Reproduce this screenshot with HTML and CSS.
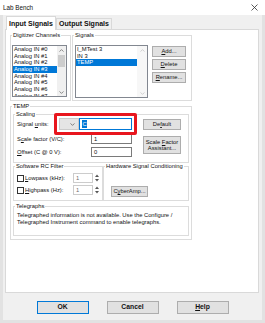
FILE: index.html
```html
<!DOCTYPE html>
<html lang="en">
<head>
  <meta charset="UTF-8">
  <title>Lab Bench</title>
  <link rel="stylesheet" href="styles.css">
</head>
<body>

<div class="titlebar">
  <span>Lab Bench</span>
  <svg width="7" height="7" viewBox="0 0 7 7"><path d="M0.5 0.5L6.5 6.5M6.5 0.5L0.5 6.5" stroke="#333" stroke-width="0.8" fill="none"/></svg>
</div>

<div class="window">
  <div class="tabs">
    <div class="tab active">Input Signals</div>
    <div class="tab">Output Signals</div>
  </div>

  <div class="panel">
    <div class="top-row">
      <div class="group channels">
        <div class="legend">Digitizer Channels</div>
        <div class="listbox channel-list">
          <div class="items">
            <div class="item">Analog IN #0</div>
            <div class="item">Analog IN #1</div>
            <div class="item">Analog IN #2</div>
            <div class="item selected">Analog IN #3</div>
            <div class="item">Analog IN #4</div>
            <div class="item">Analog IN #5</div>
            <div class="item">Analog IN #6</div>
            <div class="item">Analog IN #7</div>
          </div>
          <div class="scrollbar">
            <svg class="arrow" width="5" height="3" viewBox="0 0 5 3"><path d="M0.5 2.6L2.5 0.6L4.5 2.6" stroke="#606060" stroke-width="0.7" fill="none"/></svg>
            <div class="thumb"></div>
            <svg class="arrow down" width="5" height="3" viewBox="0 0 5 3"><path d="M0.5 0.4L2.5 2.4L4.5 0.4" stroke="#606060" stroke-width="0.7" fill="none"/></svg>
          </div>
        </div>
      </div>

      <div class="group signals">
        <div class="legend">Signals</div>
        <div class="signals-body">
          <div class="listbox signal-list">
            <div class="items">
              <div class="item">I_MTest 3</div>
              <div class="item">IN 3</div>
              <div class="item selected">TEMP</div>
            </div>
            <div class="scrollbar disabled">
              <svg class="arrow" width="5" height="3" viewBox="0 0 5 3"><path d="M0.5 2.6L2.5 0.6L4.5 2.6" stroke="#c2c2c2" stroke-width="0.7" fill="none"/></svg>
              <svg class="arrow down" width="5" height="3" viewBox="0 0 5 3"><path d="M0.5 0.4L2.5 2.4L4.5 0.4" stroke="#c2c2c2" stroke-width="0.7" fill="none"/></svg>
            </div>
          </div>
          <div class="side-buttons">
            <button class="btn"><span><u>A</u>dd...</span></button>
            <button class="btn"><span><u>D</u>elete</span></button>
            <button class="btn"><span><u>R</u>ename...</span></button>
          </div>
        </div>
      </div>
    </div>

    <div class="group temp">
      <div class="legend">TEMP</div>

      <div class="group scaling">
        <div class="legend">Scaling</div>
        <div class="scaling-body">
          <div class="scaling-fields">
            <div class="field units">
              <span>Signal <u>u</u>nits:</span>
              <div class="combo-group">
                <div class="combo">
                  <svg width="5" height="3" viewBox="0 0 5 3"><path d="M0.5 0.4L2.5 2.4L4.5 0.4" stroke="#555" stroke-width="0.7" fill="none"/></svg>
                </div>
                <div class="unit-input"><span class="sel">C</span></div>
                <div class="highlight"></div>
              </div>
            </div>
            <div class="field factor">
              <span>S<u>c</u>ale factor (V/C):</span>
              <div class="num-input">1</div>
            </div>
            <div class="field offset">
              <span><u>O</u>ffset (C @ 0 V):</span>
              <div class="num-input">0</div>
            </div>
          </div>
          <div class="scaling-buttons">
            <button class="btn default-btn"><span>De<u>f</u>ault</span></button>
            <button class="btn assistant-btn"><span>Scale <u>F</u>actor<br>Assistant...</span></button>
          </div>
        </div>
      </div>

      <div class="filter-row">
        <div class="group rc">
          <div class="legend">Software RC Filter</div>
          <div class="rc-body">
            <div class="check-row">
              <span class="checkbox"></span>
              <span class="check-label"><u>L</u>owpass (kHz):</span>
              <div class="spin">
                <div class="spin-input">1</div>
                <div class="spin-arrows">
                  <svg width="4" height="3" viewBox="0 0 4 3"><path d="M0 3L2 0.5L4 3Z" fill="#555"/></svg>
                  <svg width="4" height="3" viewBox="0 0 4 3"><path d="M0 0L2 2.5L4 0Z" fill="#555"/></svg>
                </div>
              </div>
            </div>
            <div class="check-row">
              <span class="checkbox"></span>
              <span class="check-label"><u>H</u>ighpass (Hz):</span>
              <div class="spin">
                <div class="spin-input">1</div>
                <div class="spin-arrows">
                  <svg width="4" height="3" viewBox="0 0 4 3"><path d="M0 3L2 0.5L4 3Z" fill="#555"/></svg>
                  <svg width="4" height="3" viewBox="0 0 4 3"><path d="M0 0L2 2.5L4 0Z" fill="#555"/></svg>
                </div>
              </div>
            </div>
          </div>
        </div>
        <div class="group hw">
          <div class="legend">Hardware Signal Conditioning</div>
          <button class="btn cyber-btn"><span>C<u>y</u>berAmp...</span></button>
        </div>
      </div>

      <div class="group telegraphs">
        <div class="legend">Telegraphs</div>
        <div class="tele-text">Telegraphed information is not available. Use the Configure /<br>Telegraphed Instrument command to enable telegraphs.</div>
      </div>
    </div>
  </div>

  <div class="footer">
    <button class="btn big default"><span>OK</span></button>
    <button class="btn big"><span>Cancel</span></button>
    <button class="btn big"><span><u>H</u>elp</span></button>
  </div>
</div>

</body>
</html>
```

FILE: styles.css
```css
* {
  box-sizing: border-box;
}

body {
  margin: 0;
  width: 265px;
  height: 323px;
  overflow: hidden;
  background: #e2e2e2;
  font-family: "Liberation Sans", Arial, sans-serif;
  font-size: 5.8px;
  color: #111;
}

.titlebar {
  height: 15px;
  background: #fff;
  display: flex;
  align-items: center;
  justify-content: space-between;
  padding: 0 7px 0 3px;
  font-size: 6.3px;
}

.window {
  margin: 0 3px;
  height: 305px;
  padding-top: 1px;
  background: #f0f0f0;
}

.tabs {
  display: flex;
  align-items: flex-end;
  height: 14px;
  margin-left: 3px;
}

.tab {
  width: 56px;
  height: 11px;
  margin-bottom: 1px;
  border: 1px solid #d9d9d9;
  border-bottom: none;
  text-align: center;
  font-size: 7px;
  font-weight: bold;
  line-height: 10px;
}

.tab.active {
  width: 50px;
  height: 14px;
  margin-bottom: 0;
  line-height: 13px;
  background: #fff;
  position: relative;
  z-index: 1;
}

.panel {
  width: 254px;
  height: 264px;
  margin: -1px 0 0 2px;
  padding: 5px 0 0 4px;
  background: #fff;
  border: 1px solid #d9d9d9;
}

.group {
  border: 1px solid #dcdcdc;
}

.legend {
  width: max-content;
  height: 7px;
  margin: -4px 0 0 1px;
  padding: 0 1px;
  line-height: 7px;
  background: #fff;
}

.top-row {
  display: flex;
  gap: 1px;
}

.channels {
  width: 61px;
  height: 66px;
}

.signals {
  width: 120px;
  height: 66px;
}

.listbox {
  display: flex;
  background: #fff;
  border: 1px solid #828790;
}

.channel-list {
  width: 55px;
  height: 52px;
  margin: 6px 0 0 1px;
}

.signals-body {
  display: flex;
  align-items: flex-start;
}

.signal-list {
  width: 73px;
  height: 53px;
  margin: 6px 0 0 2px;
}

.items {
  flex: 1;
  overflow: hidden;
}

.item {
  height: 6.7px;
  line-height: 6.7px;
  padding-left: 1px;
  white-space: nowrap;
}

.item.selected {
  background: #0078d7;
  color: #fff;
}

.scrollbar {
  width: 9px;
  display: flex;
  flex-direction: column;
  align-items: center;
  background: #f0f0f0;
}

.scrollbar.disabled {
  width: 10px;
  background: #f7f7f7;
}

.arrow {
  margin-top: 2.5px;
}

.arrow.down {
  margin-top: auto;
  margin-bottom: 2.5px;
}

.thumb {
  width: 7px;
  height: 12px;
  margin-top: 3px;
  background: #cdcdcd;
}

.btn {
  display: flex;
  align-items: center;
  justify-content: center;
  padding: 0;
  font: inherit;
  color: #111;
  line-height: 6.5px;
  text-align: center;
  background: #e1e1e1;
  border: 1px solid #adadad;
}

.side-buttons {
  display: flex;
  flex-direction: column;
  gap: 2px;
  width: 34px;
  margin: 7px 0 0 4px;
}

.side-buttons .btn {
  height: 11px;
}

.temp {
  width: 182px;
  height: 134px;
  margin-top: 5px;
}

.scaling {
  width: 176px;
  height: 49px;
  margin: 4px 0 0 2px;
}

.scaling-body {
  display: flex;
  padding-left: 3px;
}

.scaling-fields {
  width: 115px;
  display: flex;
  flex-direction: column;
}

.field {
  display: flex;
  align-items: center;
  justify-content: space-between;
  height: 10px;
}

.field.units {
  height: 12px;
}

.field.factor {
  margin-top: 4px;
}

.field.offset {
  margin-top: 3px;
}

.combo-group {
  display: flex;
  position: relative;
}

.combo {
  width: 20px;
  height: 12px;
  display: flex;
  align-items: center;
  justify-content: flex-end;
  padding-right: 3px;
  background: #e5e5e5;
  border: 1px solid #cbcbcb;
}

.unit-input {
  width: 53px;
  height: 12px;
  display: flex;
  align-items: center;
  padding-left: 2px;
  background: #fff;
  border: 1px solid #0078d7;
}

.sel {
  display: inline-block;
  height: 8px;
  line-height: 8px;
  padding: 0 0.5px;
  background: #0078d7;
  color: #fff;
}

.highlight {
  position: absolute;
  top: -5px;
  right: -5px;
  bottom: -5px;
  left: -5px;
  border: 3px solid #e8161e;
  border-radius: 2px;
}

.num-input {
  width: 41px;
  height: 10px;
  padding-left: 2px;
  line-height: 8px;
  background: #fff;
  border: 1px solid #7a7a7a;
}

.scaling-buttons {
  display: flex;
  flex-direction: column;
  gap: 6px;
  width: 38px;
  margin: 1px 0 0 11px;
}

.default-btn {
  height: 11px;
}

.assistant-btn {
  height: 18px;
}

.filter-row {
  display: flex;
  margin: 3px 0 0 2px;
}

.rc {
  width: 90px;
  height: 35px;
}

.hw {
  width: 86px;
  height: 35px;
}

.rc-body {
  padding: 3px 2px 0 3px;
}

.check-row {
  display: flex;
  align-items: center;
  height: 10px;
}

.check-row + .check-row {
  margin-top: 2px;
}

.checkbox {
  width: 7px;
  height: 7px;
  margin-right: 1px;
  background: #fff;
  border: 1px solid #333;
}

.check-label {
  flex: 1;
}

.spin {
  display: flex;
  height: 10px;
}

.spin-input {
  width: 20px;
  padding-left: 2px;
  line-height: 8px;
  color: #6d6d6d;
  border: 1px solid #cccccc;
}

.spin-arrows {
  width: 7px;
  display: flex;
  flex-direction: column;
  align-items: center;
  justify-content: space-around;
}

.cyber-btn {
  width: 37px;
  height: 11px;
  margin: 16px 0 0 7px;
}

.telegraphs {
  width: 176px;
  height: 30px;
  margin: 5px 0 0 2px;
}

.tele-text {
  padding: 2px 3px 0;
  line-height: 6.5px;
  white-space: nowrap;
}

.footer {
  display: flex;
  justify-content: center;
  gap: 18px;
  margin-top: 8px;
}

.btn.big {
  width: 52px;
  height: 13px;
  font-size: 6.8px;
  font-weight: bold;
}

.btn.default {
  border-color: #0078d7;
}
```
